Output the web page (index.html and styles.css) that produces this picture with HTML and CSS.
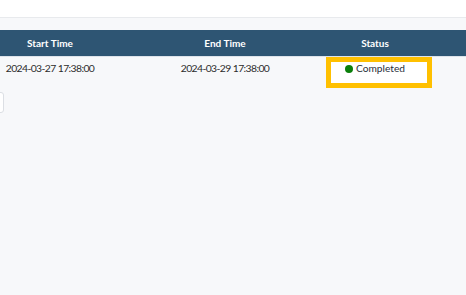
FILE: index.html
```html
<!DOCTYPE html>
<html>
<head>
<meta charset="utf-8">
<link rel="stylesheet" href="styles.css">
</head>
<body>
<div class="topbar"></div>
<main class="content">
  <div class="table">
    <div class="row head">
      <div class="cell">Start Time</div>
      <div class="cell">End Time</div>
      <div class="cell">Status</div>
    </div>
    <div class="row body">
      <div class="cell date">2024-03-27 17:38:00</div>
      <div class="cell date">2024-03-29 17:38:00</div>
      <div class="cell status-cell">
        <div class="highlight">
          <span class="dot"></span><span class="status-text">Completed</span>
        </div>
      </div>
    </div>
  </div>
  <div class="pager"></div>
</main>
</body>
</html>
```
FILE: styles.css
```css
html, body {
  margin: 0;
  padding: 0;
}
body {
  width: 466px;
  height: 295px;
  overflow: hidden;
  background: #f7f8fa;
  font-family: Lato, sans-serif;
  font-size: 10px;
  color: #2b2b2b;
}
.topbar {
  height: 17px;
  background: #fff;
  border-bottom: 1px solid #e8eaed;
}
.content {
  padding-top: 12px;
}
.table {
  margin-left: -50px;
  width: 520px;
}
.row {
  display: grid;
  grid-template-columns: 200px 150px 150px 1fr;
}
.head {
  height: 26px;
  align-items: center;
  background: #2e5573;
  color: #fff;
  font-size: 10px;
  font-weight: 700;
  border-bottom: 1px solid #dde3ea;
}
.cell {
  text-align: center;
}
.body {
  height: 32px;
  align-items: start;
}
.body > .cell {
  padding-top: 4px;
  line-height: 14px;
}
.date {
  font-size: 10.4px;
  letter-spacing: -0.6px;
}
.body > .status-cell {
  padding-top: 0;
  display: flex;
}
.highlight {
  margin-left: 26px;
  width: 106px;
  height: 31px;
  box-sizing: border-box;
  border: 5px solid #ffc000;
  background: #fff;
  display: flex;
  align-items: flex-start;
  padding-left: 14px;
  padding-top: 0;
  gap: 3px;
}
.dot {
  width: 8px;
  height: 8px;
  border-radius: 50%;
  background: #0a7f0a;
  margin-top: 3px;
}
.status-text {
  line-height: 13px;
  font-size: 10.2px;
  color: #2a2f3a;
}
.pager {
  margin-top: 3px;
  width: 20px;
  height: 19px;
  margin-left: -18px;
  border: 1px solid #dcdfe4;
  border-radius: 3px;
  background: #fff;
}
```
